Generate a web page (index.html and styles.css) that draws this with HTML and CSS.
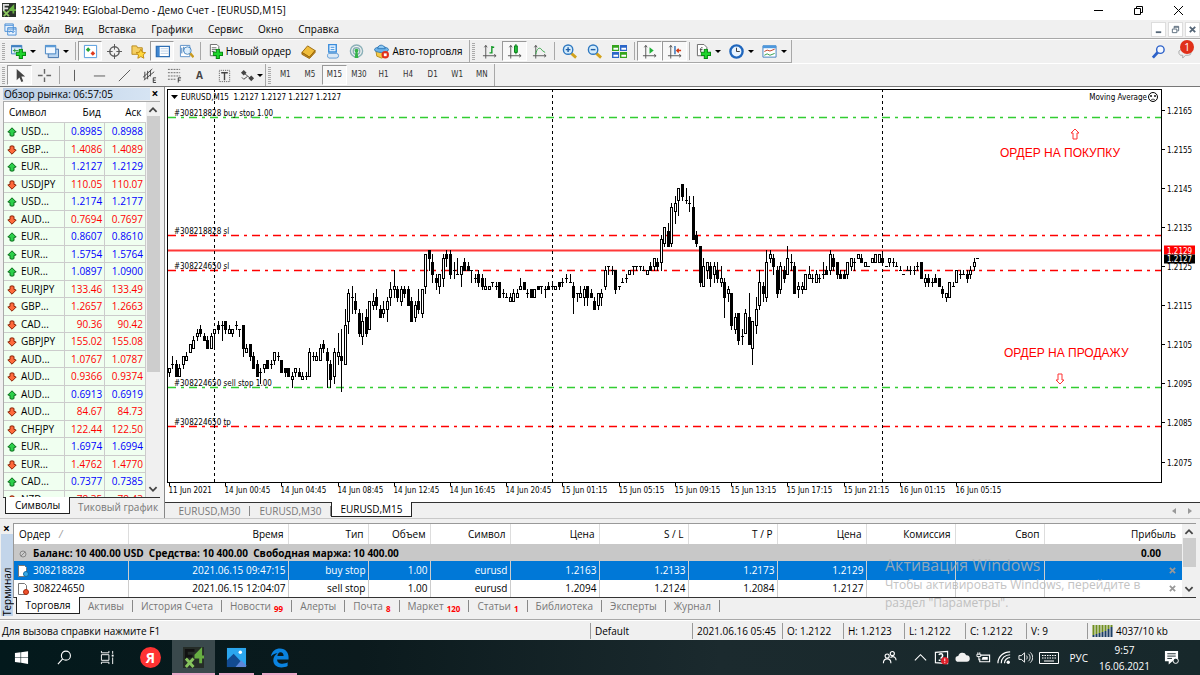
FILE: index.html
```html
<!DOCTYPE html>
<html lang="ru">
  <head>
    <meta charset="UTF-8" />
    <meta name="viewport" content="width=device-width, initial-scale=1.0" />
    <title>1235421949: EGlobal-Demo - Демо Счет - [EURUSD,M15]</title>
    <link rel="stylesheet" href="styles.css">
  </head>
  <body>
    <svg class="defs" aria-hidden="true">
      <symbol id="i-up" viewBox="0 0 10 10"><path d="M5 .8L9.2 5 7 5.4V8.6L5 9.2 3 8.6V5.4L.8 5z" fill="#2bd04a" stroke="#0b6b1c"/></symbol>
      <symbol id="i-down" viewBox="0 0 10 10"><path d="M5 9.2L.8 5 3 4.4V1.4L5 .8 7 1.4V4.4L9.2 5z" fill="#ff6a3c" stroke="#8a2408"/></symbol>
      <symbol id="i-plus" viewBox="0 0 10 10"><path d="M3.5.5h3v3h3v3h-3v3h-3v-3h-3v-3h3z" fill="#1ed52c" stroke="#078a10"/></symbol>
      <symbol id="i-axes" viewBox="0 0 16 16"><path d="M4 1.5v14M1 12.5h14M2.500 3.500L4 1.500l1.500 2M13 11l2 1.500-2 1.500" fill="none" stroke="#555"/></symbol>
    </svg>

    <header class="titlebar">
      <svg class="app-icon" viewBox="0 0 16 16"><path d="M0 0h16v16H0z" fill="#2b332c"/><path d="M1 1h7v2H3v2h4v2H3v2H1z" fill="#ddd"/><path d="M14 1L8 7v2h4v3h2V9h2V7h-2z" fill="#6ab344"/><path d="M2 9l6 6M8 9l-6 6" stroke="#8fca62" stroke-width="2"/></svg>
      <h1>1235421949: EGlobal-Demo - Демо Счет - [EURUSD,M15]</h1>
      <div class="win-buttons">
        <button aria-label="Свернуть"><svg viewBox="0 0 12 12"><path d="M2 6.500h9" stroke="#000"/></svg></button>
        <button aria-label="Восстановить"><svg viewBox="0 0 12 12"><path d="M2.500 4.500h6v6h-6zM4.500 4V2.500h6v6H9" fill="none" stroke="#000"/></svg></button>
        <button aria-label="Закрыть"><svg viewBox="0 0 12 12"><path d="M2 2l9 9M11 2l-9 9" stroke="#000"/></svg></button>
      </div>
    </header>

    <nav class="menubar">
      <svg class="menu-icon" viewBox="0 0 14 14"><path d="M1 1h9v8H1zM4 5h9v8H4z" fill="#e8f2fd" stroke="#4a8fd6"/><path d="M1 2.500h9M4 6.500h9" stroke="#4a8fd6"/><path d="M5.500 10l2-1.500 2 2 2-1.500" fill="none" stroke="#4a8fd6"/></svg>
      <a href="#">Файл</a><a href="#">Вид</a><a href="#">Вставка</a><a href="#">Графики</a><a href="#">Сервис</a><a href="#">Окно</a><a href="#">Справка</a>
      <div class="mdi-buttons">
        <button aria-label="Свернуть окно"><svg viewBox="0 0 10 10"><path d="M2 8h6" stroke="#567" stroke-width="2"/></svg></button>
        <button aria-label="Восстановить окно"><svg viewBox="0 0 10 10"><path d="M1.500 4.500h5v4h-5zM3.500 4V1.500h5v5H7M3.500 2.500h5" fill="none" stroke="#567"/></svg></button>
        <button aria-label="Закрыть окно"><svg viewBox="0 0 10 10"><path d="M2 2l6 6M8 2L2 8" stroke="#567" stroke-width="2"/></svg></button>
      </div>
    </nav>

    <div class="toolbar toolbar-main">
      <div class="band">
        <span class="grip"></span>
        <button class="drop" aria-label="Новый график"><svg viewBox="0 0 16 16"><path d="M.5 1.500h11v9H.5z" fill="#dcecfb" stroke="#3f7fc0"/><path d="M.5 2.500h11" stroke="#3f7fc0" stroke-width="2"/><path d="M2 7h6M4 5v4" stroke="#2a9a3a"/><use href="#i-plus" x="5" y="5" width="11" height="11"/></svg></button>
        <button class="drop" aria-label="Профили"><svg viewBox="0 0 16 16"><path d="M4.500 5.500h11v9h-11z" fill="#b8d4f0" stroke="#3f6fa8"/><path d="M1.500 1.500h11v9h-11z" fill="#f2f8ff" stroke="#3f7fc0"/><path d="M1.500 2.500h11" stroke="#5b9bd8" stroke-width="2"/></svg></button>
        <span class="sep"></span>
        <button class="on" aria-label="Обзор рынка"><svg viewBox="0 0 16 16"><path d="M1.500 1.500h13v13h-13z" fill="#fff" stroke="#4e98dd"/><path d="M3 6l2.500-2.500L8 6 5.500 8.500z" fill="#23a536"/><path d="M8 10l2.500-2.500L13 10l-2.500 2.500z" fill="#e03a1d"/></svg></button>
        <button aria-label="Окно данных"><svg viewBox="0 0 16 16"><circle cx="8" cy="8" r="5" fill="none" stroke="#555" stroke-width="1.500"/><path d="M8 0v6M8 10v6M0 8h6M10 8h6" stroke="#555"/></svg></button>
        <button aria-label="Навигатор"><svg viewBox="0 0 16 16"><path d="M1 2h5l1 2h5v7H1z" fill="#f5cf62" stroke="#b98a1c"/><path d="M10.500 5.500l1.600 3.300 3.500.4-2.600 2.400.7 3.600-3.200-1.800-3.200 1.800.7-3.600-2.600-2.400 3.500-.4z" fill="#ffd83c" stroke="#c08a12"/></svg></button>
        <button class="on" aria-label="Терминал"><svg viewBox="0 0 16 16"><path d="M1.500 2.500h14v11h-14z" fill="#fff" stroke="#2f6fb4" stroke-width="1.500"/><path d="M2 3h3v10H2z" fill="#3f86d0"/><path d="M6 5h8M6 7.500h8M6 10h8" stroke="#b9cfe6"/></svg></button>
        <button aria-label="Тестер стратегий"><svg viewBox="0 0 16 16"><path d="M1.500 1.500h10v12h-10z" fill="#fff" stroke="#5b8fc7"/><path d="M3 10V4M5 8V3" stroke="#3c78b8"/><circle cx="9" cy="7" r="4" fill="#d6ebfb" fill-opacity=".8" stroke="#4a86c2"/><path d="M12 10l3.500 4" stroke="#c99a1e" stroke-width="2.500"/></svg></button>
        <span class="sep"></span>
        <button class="wide"><svg viewBox="0 0 16 16"><path d="M2.500.5h7l2 2v10h-9z" fill="#fff" stroke="#666"/><path d="M4 4h5M4 6h5M4 8h3" stroke="#666"/><use href="#i-plus" x="5" y="5" width="11" height="11"/></svg>Новый ордер</button>
        <button aria-label="MetaEditor"><svg viewBox="0 0 16 16"><path d="M1 9l6-7 8 5-6 7z" fill="#f0bd3b" stroke="#99670c"/><path d="M1 9v2l8 4.500 6-6.500V7l-6 7z" fill="#c98b18" stroke="#99670c"/></svg></button>
        <button aria-label="Почта"><svg viewBox="0 0 16 16"><path d="M4 .5h8v8H4z" fill="#eaf5ff" stroke="#3b8ddb" stroke-width="1.500"/><path d="M6 3.500h4M6 6h4" stroke="#3b8ddb"/><path d="M4 15a3 3 0 010-5h8a2.500 2.500 0 010 5z" fill="#dce9f5" stroke="#5d9ad4"/></svg></button>
        <button aria-label="Сигналы"><svg viewBox="0 0 16 16"><g fill="none" stroke="#8ab0b8" stroke-width="1.500"><circle cx="8" cy="7.500" r="6.500"/><circle cx="8" cy="7.500" r="3.500"/></g><circle cx="8" cy="7" r="2" fill="#36b34a"/><path d="M7 8h2l1 7H6z" fill="#36b34a"/></svg></button>
        <button class="wide auto"><svg viewBox="0 0 16 16"><path d="M2 7l1 6 5 2 5-2 1-6z" fill="#f3ca49" stroke="#b68b1a"/><ellipse cx="8" cy="6" rx="7.500" ry="3" fill="#6db4ea" stroke="#2f76b5"/><path d="M4 5c0-5 7-5 8 0z" fill="#8cc8f3" stroke="#2f76b5"/><circle cx="12" cy="11.500" r="4" fill="#e2311b"/><path d="M10.500 10h3v3h-3z" fill="#fff"/></svg>Авто-торговля</button>
      </div>
      <div class="band charting">
        <span class="grip"></span>
        <button aria-label="Бары"><svg viewBox="0 0 16 16"><use href="#i-axes"/><path d="M10.500 2v8M8 9.500h2M11 3.500h2" stroke="#149a28" stroke-width="1.500"/></svg></button>
        <button class="on" aria-label="Японские свечи"><svg viewBox="0 0 16 16"><use href="#i-axes"/><path d="M9.500 0v11" stroke="#087a18"/><path d="M8 2h3v7H8z" fill="#25c43b" stroke="#087a18"/></svg></button>
        <button aria-label="Линия"><svg viewBox="0 0 16 16"><use href="#i-axes"/><path d="M4 11c1-6 4-9 7-4l3 2" fill="none" stroke="#36a447"/></svg></button>
        <span class="sep"></span>
        <button aria-label="Увеличить"><svg viewBox="0 0 16 16"><path d="M10 10l5 4.500" stroke="#d2a21d" stroke-width="3"/><circle cx="6.500" cy="6" r="5" fill="#d4ecfc" stroke="#2f78c0" stroke-width="1.500"/><path d="M4 6h5M6.500 3.500v5" stroke="#1f5ea6" stroke-width="1.500"/></svg></button>
        <button aria-label="Уменьшить"><svg viewBox="0 0 16 16"><path d="M10 10l5 4.500" stroke="#d2a21d" stroke-width="3"/><circle cx="6.500" cy="6" r="5" fill="#d4ecfc" stroke="#2f78c0" stroke-width="1.500"/><path d="M4 6h5" stroke="#1f5ea6" stroke-width="1.500"/></svg></button>
        <button aria-label="Окна мозаикой"><svg viewBox="0 0 16 16"><path d="M0 1h7.500v6.500H0zM8.500 8.500H16V15H8.500z" fill="#35a51e"/><path d="M8.500 1H16v6.500H8.500zM0 8.500h7.500V15H0z" fill="#2b66c8"/><path d="M1.500 4h5v2h-5zM10 4h5v2h-5zM1.500 11.500h5v2h-5zM10 11.500h5v2h-5z" fill="#fff"/></svg></button>
        <span class="sep"></span>
        <button class="on" aria-label="Автопрокрутка"><svg viewBox="0 0 16 16"><use href="#i-axes"/><path d="M8 3.500l4.500 3.500L8 10.500z" fill="#22b23a"/></svg></button>
        <button class="on" aria-label="Сдвиг графика"><svg viewBox="0 0 16 16"><use href="#i-axes"/><path d="M8.500 2v9" stroke="#2f6fb4" stroke-width="1.500"/><path d="M15 7h-4M12.500 5l-2 2 2 2" fill="none" stroke="#d23a17" stroke-width="1.500"/></svg></button>
        <span class="sep"></span>
        <button class="drop" aria-label="Индикаторы"><svg viewBox="0 0 16 16"><path d="M1.500.5h7l3 3v9h-10z" fill="#fff" stroke="#666"/><path d="M5 9V5c0-1 1-1.500 2-1M4 6h3" fill="none" stroke="#444"/><use href="#i-plus" x="5" y="5" width="11" height="11"/></svg></button>
        <button class="drop" aria-label="Периоды"><svg viewBox="0 0 16 16"><circle cx="8" cy="8" r="6.500" fill="#e7f3ff" stroke="#1f66bd" stroke-width="2.500"/><path d="M8 4v4h3.500" fill="none" stroke="#333"/></svg></button>
        <button class="drop" aria-label="Шаблоны"><svg viewBox="0 0 16 16"><path d="M1 2h14v12H1z" fill="#fff" stroke="#3f7fc0"/><path d="M1 3h14" stroke="#4e98dd" stroke-width="3"/><path d="M2.500 8l3-1.500 3 1 5-2" fill="none" stroke="#c0391c"/><path d="M2.500 12l3-1.500 3 1.500 5-2" fill="none" stroke="#2b9a48"/></svg></button>
      </div>
      <div class="tool-right">
        <button aria-label="Поиск"><svg viewBox="0 0 16 16"><path d="M7.500 8.500l-5.500 6" stroke="#2d62c9" stroke-width="3"/><circle cx="10" cy="6" r="4" fill="#f4f8ff" stroke="#2d62c9" stroke-width="1.500"/></svg></button>
        <button class="chat" aria-label="Сообщения"><svg viewBox="0 0 16 16"><path d="M3 6h8a3 3 0 010 6H8l-3 3v-3a3 3 0 01-2-6z" fill="#eee" stroke="#aaa"/></svg><span class="badge">1</span></button>
      </div>
    </div>

    <div class="toolbar toolbar-line">
      <div class="band tools">
        <span class="grip"></span>
        <button class="on" aria-label="Курсор"><svg viewBox="0 0 16 16"><path d="M5 1v12l3-3 2 5 2-1-2-5h4z" fill="#444"/></svg></button>
        <button aria-label="Перекрестие"><svg viewBox="0 0 16 16"><path d="M8 1v5M8 10v5M1 8h5M10 8h5" stroke="#666" stroke-width="1.500"/></svg></button>
        <span class="sep"></span>
        <button aria-label="Вертикальная линия"><svg viewBox="0 0 16 16"><path d="M8 2v12" stroke="#555"/></svg></button>
        <button aria-label="Горизонтальная линия"><svg viewBox="0 0 16 16"><path d="M2 8.500h12" stroke="#555"/></svg></button>
        <button aria-label="Трендовая линия"><svg viewBox="0 0 16 16"><path d="M2 14L14 2" stroke="#555"/></svg></button>
        <button aria-label="Канал"><svg viewBox="0 0 16 16"><path d="M1 10L11 1M2 13L13 4M3 4v8M6 3v9M9 2v7" stroke="#444"/><path d="M15 10.500h-3v5h3M12 13h2.500" fill="none" stroke="#333"/></svg></button>
        <button aria-label="Фибоначчи"><svg viewBox="0 0 16 16"><path d="M1 1.500h13M1 5h13M1 8.500h13M1 12h8" stroke="#666" stroke-dasharray="2 1"/><path d="M15 10.500h-3v5M12 13h2.500" fill="none" stroke="#333"/></svg></button>
        <button class="glyph">A</button>
        <button aria-label="Метка"><svg viewBox="0 0 16 16"><path d="M2.500 2.500h11v12h-11z" fill="none" stroke="#555" stroke-dasharray="1 1"/><path d="M4.500 5h7M8 5v8" stroke="#444" stroke-width="1.500"/></svg></button>
        <button class="drop" aria-label="Стрелки"><svg viewBox="0 0 16 16"><path d="M1 5l3-3 3 3-3 3zM9 11l3-3 3 3-3 3z" fill="#444"/><path d="M5 6l6 5M2 10l2 2 4-3" fill="none" stroke="#444"/></svg></button>
      </div>
      <div class="band">
        <span class="grip"></span>
        <div class="periods">
          <button>M1</button><button>M5</button><button class="on">M15</button><button>M30</button><button>H1</button><button>H4</button><button>D1</button><button>W1</button><button>MN</button>
        </div>
      </div>
    </div>

    <main>
      <section class="market">
        <div class="panel-title"><h2>Обзор рынка: 06:57:05</h2><button aria-label="Закрыть обзор">×</button></div>
        <div class="market-body">
          <div class="market-list">
            <table>
              <thead><tr><th>Символ</th><th>Бид</th><th>Аск</th></tr></thead>
              <tbody id="quotes"></tbody>
            </table>
          </div>
          <div class="scroll">
            <svg viewBox="0 0 10 10"><path d="M2 6.500l3-3 3 3" fill="none" stroke="#444" stroke-width="1.500"/></svg>
            <span class="thumb"></span>
            <svg viewBox="0 0 10 10"><path d="M2 3.500l3 3 3-3" fill="none" stroke="#444" stroke-width="1.500"/></svg>
          </div>
        </div>
        <div class="market-tabs"><button class="active">Символы</button><button>Тиковый график</button></div>
      </section>

      <section class="chart">
        <svg id="chart"></svg>
        <div class="chart-tabs">
          <button>EURUSD,M30</button><button>EURUSD,M30</button><button class="active">EURUSD,M15</button>
          <div class="tab-arrows"><svg viewBox="0 0 8 8"><path d="M6 1v6L2 4z" fill="#999"/></svg><svg viewBox="0 0 8 8"><path d="M2 1v6l4-3z" fill="#999"/></svg></div>
        </div>
      </section>
    </main>

    <section class="terminal">
      <div class="terminal-side"><button aria-label="Закрыть терминал">×</button><span>Терминал</span></div>
      <div class="terminal-body">
        <div class="orders">
          <table>
            <colgroup><col class="c-order"><col class="c-time"><col class="c-type"><col class="c-vol"><col class="c-type"><col class="c-price"><col class="c-price"><col class="c-price"><col class="c-price"><col class="c-price"><col class="c-price"><col></colgroup>
            <thead>
              <tr><th>Ордер <i>/</i></th><th>Время</th><th>Тип</th><th>Объем</th><th>Символ</th><th>Цена</th><th>S / L</th><th>T / P</th><th>Цена</th><th>Комиссия</th><th>Своп</th><th>Прибыль</th></tr>
            </thead>
            <tbody>
              <tr class="balance"><td colspan="11"><svg viewBox="0 0 12 12"><circle cx="6" cy="6" r="3" fill="#ccc" stroke="#888"/><path d="M4 8l4-4" stroke="#888"/></svg>Баланс: 10 400.00 USD&nbsp; Средства: 10 400.00&nbsp; Свободная маржа: 10 400.00</td><td>0.00</td></tr>
              <tr class="selected"><td><svg viewBox="0 0 12 12"><path d="M1.500.5h6l2 2v9h-8z" fill="#fff" stroke="#777"/><circle cx="9" cy="9" r="2.500" fill="#35a9e8" stroke="#0d6ca5"/></svg>308218828</td><td>2021.06.15 09:47:15</td><td>buy stop</td><td>1.00</td><td>eurusd</td><td>1.2163</td><td>1.2133</td><td>1.2173</td><td>1.2129</td><td></td><td></td><td><button aria-label="Удалить ордер 308218828"><svg viewBox="0 0 8 8"><path d="M1 1l6 6M7 1L1 7"/></svg></button></td></tr>
              <tr><td><svg viewBox="0 0 12 12"><path d="M1.500.5h6l2 2v9h-8z" fill="#fff" stroke="#777"/><circle cx="9" cy="9" r="2.500" fill="#f0502c" stroke="#a52a0d"/></svg>308224650</td><td>2021.06.15 12:04:07</td><td>sell stop</td><td>1.00</td><td>eurusd</td><td>1.2094</td><td>1.2124</td><td>1.2084</td><td>1.2127</td><td></td><td></td><td><button aria-label="Удалить ордер 308224650"><svg viewBox="0 0 8 8"><path d="M1 1l6 6M7 1L1 7"/></svg></button></td></tr>
            </tbody>
          </table>
          <div class="scroll small">
            <svg viewBox="0 0 10 10"><path d="M2 6.500l3-3 3 3" fill="none" stroke="#444" stroke-width="1.500"/></svg>
            <span class="thumb"></span>
            <svg viewBox="0 0 10 10"><path d="M2 3.500l3 3 3-3" fill="none" stroke="#444" stroke-width="1.500"/></svg>
          </div>
        </div>
        <div class="terminal-tabs">
          <button class="active">Торговля</button><button>Активы</button><button>История Счета</button><button>Новости<b>99</b></button><button>Алерты</button><button>Почта<b>8</b></button><button>Маркет<b>120</b></button><button>Статьи<b>1</b></button><button>Библиотека</button><button>Эксперты</button><button>Журнал</button>
        </div>
      </div>
      <div class="watermark"><strong>Активация Windows</strong><p>Чтобы активировать Windows, перейдите в раздел "Параметры".</p></div>
    </section>

    <div class="statusbar">
      <span class="hint">Для вызова справки нажмите F1</span>
      <span class="s-profile">Default</span>
      <span class="s-date">2021.06.16 05:45</span>
      <span>O: 1.2122</span><span>H: 1.2123</span><span>L: 1.2122</span><span>C: 1.2122</span><span>V: 9</span>
      <span class="s-net"><svg viewBox="0 0 22 12"><path d="M1.500 0v10M4.500 0v9M7.500 0v8M10.500 0v7M13.500 0v6M16.500 0v4M19.500 0v2" stroke="#6f8f1e" stroke-width="2"/><path d="M1.500 10v2M4.500 9v3M7.500 8v4M10.500 7v5M13.500 6v6M16.500 4v8M19.500 2v10" stroke="#1c3f66" stroke-width="2"/></svg>4037/10 kb</span>
    </div>

    <footer class="taskbar">
      <button aria-label="Пуск"><svg viewBox="0 0 16 16"><path d="M1 3.200l6-.8v5.200H1zM7.600 2.300L15 1.200v6.400H7.600zM1 8.300h6v5.300l-6-.8zM7.600 8.300H15v6.500l-7.400-1.100z" fill="#fff"/></svg></button>
      <button aria-label="Поиск Windows"><svg viewBox="0 0 16 16"><circle cx="9.500" cy="6" r="4.800" fill="none" stroke="#fff" stroke-width="1.200"/><path d="M6 9.500L1 15" stroke="#fff" stroke-width="1.200"/></svg></button>
      <button aria-label="Представление задач"><svg viewBox="0 0 16 16"><path d="M1.500 5h8v6h-8zM1.500 1v2h8V1M1.500 15v-2h8v2M13.500 1v3M13.500 8v7" fill="none" stroke="#fff"/><path d="M12.500 5h2v2h-2z" fill="#fff"/></svg></button>
      <button class="yandex" aria-label="Яндекс">Я</button>
      <button class="running current" aria-label="MetaTrader"><svg class="big" viewBox="0 0 22 22"><path d="M0 0h22v22H0z" fill="#252c27"/><path d="M2 2h10v3H5v3h5v3H5v3H2z" fill="#111"/><path d="M20 0l-8 8v4h5v5h3v-5h2V9h-2z" fill="#67ae42"/><path d="M3 12l8 9M11 12l-8 9" stroke="#86c35d" stroke-width="3"/></svg></button>
      <button class="running" aria-label="Фотографии"><svg class="big" viewBox="0 0 22 22"><path d="M1 1h20v20H1z" fill="#2ba6ee"/><path d="M1 14l7-7 13 14H1z" fill="#124b91"/><path d="M10 21l6-7 5 5v2z" fill="#5d86d8"/><circle cx="15" cy="5.500" r="1.800" fill="#fff"/></svg></button>
      <button class="running" aria-label="Edge"><svg class="big" viewBox="0 0 22 22"><path d="M2 10C3 4 7 1.500 11.500 1.500c6 0 9 4.500 9 9V13H8.500c0 3 2.500 4.500 5.500 4.500 2 0 4-.5 5.500-1.500v4c-2 1-4 1.500-6.500 1.500-5 0-8.500-3-8.500-7.500 0-3.500 2-6 4.500-7.500C6 6.800 3.500 8 2 10zM8.800 9.500h6.500c0-2.500-1.200-4-3.200-4S9 7.500 8.800 9.500z" fill="#0a83e0"/></svg></button>
      <div class="tray">
        <svg viewBox="0 0 16 16"><g fill="none" stroke="#fff" stroke-width="1.200"><circle cx="5.500" cy="6.500" r="2.200"/><circle cx="11" cy="3.800" r="2.200"/><path d="M1.500 14c0-6 8-6 8 0M9 8c3-2 6-.5 6 3"/></g></svg>
        <svg viewBox="0 0 16 16"><path d="M2 11l6-6 6 6" fill="none" stroke="#fff" stroke-width="1.200"/></svg>
        <svg viewBox="0 0 16 16"><path d="M1.500 2.500L14.500 1.500v13L1.500 13.500z" fill="none" stroke="#fff" stroke-width="1.200"/><path d="M5 5c4-3 6 1 2 4M5 11h2" fill="none" stroke="#fff" stroke-width="1.500"/><circle cx="11.500" cy="11.500" r="4" fill="#e0202a"/><path d="M11.500 9v3M11.500 13v1" stroke="#fff"/></svg>
        <svg viewBox="0 0 16 16"><path d="M3.500 12.500a3 3 0 010-6 4.500 4.500 0 018.500-1 3.500 3.500 0 01.5 7z" fill="#f1f1f1"/></svg>
        <svg viewBox="0 0 16 16"><path d="M5 5.500h9.500v7H4V9" fill="none" stroke="#fff" stroke-width="1.200"/><path d="M7 7.500h5.500v3H6z" fill="#fff"/><path d="M1 4.500h4v2.500H1zM2 2.500v2M4 2.500v2M3 7v4" stroke="#fff" fill="none"/></svg>
        <svg viewBox="0 0 16 16"><g fill="none" stroke="#fff" stroke-width="1.200"><path d="M1 14C1 7 7 2 14 2"/><path d="M4.500 14c0-5 4-9 9.500-9"/><path d="M8 14c0-3 2.500-6 6-6"/></g><circle cx="12" cy="13" r="1.800" fill="#fff"/></svg>
        <svg viewBox="0 0 16 16"><path d="M1 6h2.500L7 3v10L3.500 10H1z" fill="none" stroke="#fff"/><path d="M9 6c1 1 1 3 0 4M11 4c2.500 2 2.500 6 0 8M13 2.500c3.500 3 3.500 8 0 11" fill="none" stroke="#fff"/></svg>
        <svg class="kbd" viewBox="0 0 20 12"><path d="M.5.5h19v11H.5z" fill="none" stroke="#fff"/><path d="M3 3.500h14M3 6h14" stroke="#fff" stroke-dasharray="1.500 1"/><path d="M5 9h10" stroke="#fff"/></svg>
        <span class="lang">РУС</span>
        <div class="clock"><time>9:57</time><time>16.06.2021</time></div>
        <svg class="note" viewBox="0 0 16 16"><path d="M1 1h14v11H9l-4 3.500V12H1z" fill="#fff"/><path d="M3.500 4h9M3.500 6.500h9M3.500 9h5" stroke="#1a2a2d"/><circle cx="12.500" cy="11.500" r="2.800" fill="#1a2a2d" stroke="#fff"/></svg>
      </div>
    </footer>
    <script src="script.js"></script>
  </body>
</html>
```

FILE: styles.css
```css
* {
  box-sizing: border-box;
}
html,
body {
  height: 100%;
  margin: 0;
}
body {
  display: flex;
  flex-direction: column;
  overflow: hidden;
  background-color: #f0f0f0;
  color: #000;
  font-family: "Open Sans", "Noto Sans", sans-serif;
  font-size: 10px;
  line-height: 14px;
}
h1,
h2,
p {
  margin: 0;
  font-size: 10px;
  font-weight: normal;
}
button {
  display: flex;
  align-items: center;
  justify-content: center;
  margin: 0;
  padding: 0;
  border: none;
  background: none;
  color: inherit;
  font: inherit;
  white-space: nowrap;
}
svg {
  flex: none;
}
.defs {
  position: absolute;
  width: 0;
  height: 0;
}

/* title and menu */
.titlebar {
  display: flex;
  align-items: center;
  flex: none;
  height: 20px;
  padding-left: 2px;
  background-color: #fff;
}
.app-icon {
  width: 14px;
  height: 14px;
  margin-right: 4px;
}
.win-buttons {
  display: flex;
  margin-left: auto;
  padding-right: 2px;
}
.win-buttons button {
  width: 40px;
  height: 18px;
}
.win-buttons svg {
  width: 12px;
  height: 12px;
}
.menubar {
  display: flex;
  align-items: center;
  flex: none;
  height: 19px;
  padding-left: 4px;
  border-bottom: 1px solid #a8a8a8;
}
.menu-icon {
  width: 13px;
  height: 13px;
}
.menubar a {
  padding: 0 8px 0 7px;
  color: #000;
  text-decoration: none;
}
.mdi-buttons {
  display: flex;
  gap: 2px;
  margin-left: auto;
}
.mdi-buttons button {
  width: 15px;
  height: 15px;
  background-color: #fff;
  border: 1px solid #ddd;
}
.mdi-buttons svg {
  width: 9px;
  height: 9px;
}

/* toolbars */
.toolbar {
  display: flex;
  flex: none;
  height: 24px;
  border-top: 1px solid #fff;
}
.toolbar-line {
  height: 23px;
}
.band {
  display: flex;
  align-items: center;
  padding-left: 2px;
  border-right: 1px solid #a8a8a8;
  border-bottom: 1px solid #a8a8a8;
}
.toolbar-line .band {
  border-bottom: none;
}
.grip {
  width: 3px;
  height: 17px;
  margin-right: 2px;
  background: repeating-linear-gradient(#aaa 0 1px, #f0f0f0 1px 2px);
}
.sep {
  width: 1px;
  height: 18px;
  margin: 0 2px;
  background-color: #a8a8a8;
}
.band button {
  width: 24px;
  height: 20px;
  border: 1px solid transparent;
}
.band svg,
.tool-right svg {
  width: 15px;
  height: 15px;
}
.tools button,
.charting button {
  width: 25px;
}
.band .on {
  background-color: #f8f8f8;
  border-color: #999 #fff #fff #999;
}
.band .drop {
  width: 33px;
  gap: 4px;
}
.drop::after {
  content: "";
  border: 3px solid transparent;
  border-top-color: #000;
  border-bottom: none;
}
.band .wide {
  width: 93px;
  gap: 3px;
}
.band .auto {
  width: 101px;
}
.tool-right {
  display: flex;
  align-items: center;
  gap: 10px;
  margin-left: auto;
  padding-right: 6px;
}
.tool-right .chat {
  position: relative;
  width: 18px;
}
.badge {
  position: absolute;
  top: -4px;
  right: 0;
  width: 14px;
  height: 14px;
  border-radius: 7px;
  background-color: #e0301a;
  color: #fff;
  text-align: center;
}
.tools .glyph {
  color: #444;
  font-weight: bold;
}
.tools .drop {
  width: 28px;
  gap: 2px;
}
.periods {
  display: flex;
  width: 221px;
}
.periods button {
  flex: 1;
  color: #333;
  font-family: "DejaVu Sans Condensed", "DejaVu Sans", sans-serif;
  font-size: 8px;
}

main {
  display: flex;
  flex: 1;
  min-height: 0;
  border-top: 1px solid #777;
  border-bottom: 1px solid #c8c8c8;
}

/* market watch */
.market {
  display: flex;
  flex-direction: column;
  width: 165px;
  padding: 0 4px 2px 3px;
  border-right: 1px solid #888;
}
.panel-title {
  display: flex;
  align-items: center;
  flex: none;
  height: 14px;
}
.panel-title h2 {
  flex: 1;
  height: 12px;
  padding-left: 1px;
  line-height: 12px;
  background: linear-gradient(90deg, #b9cde5, #d6e4f3);
}
.panel-title button {
  width: 10px;
  height: 12px;
  font-size: 12px;
  font-weight: bold;
}
.market-body {
  display: flex;
  flex: 1;
  min-height: 0;
  border-top: 1px solid #aaa;
  border-left: 1px solid #aaa;
}
.market-list {
  flex: 1;
  overflow: hidden;
  background-color: #fff;
}
table {
  width: 100%;
  border-collapse: collapse;
  table-layout: fixed;
}
th,
td {
  padding: 0;
  font-weight: normal;
  white-space: nowrap;
}
.market th {
  height: 20px;
  padding-right: 4px;
  text-align: right;
  border-bottom: 1px solid #ccc;
}
.market th:first-child {
  width: 60px;
  padding-left: 5px;
  text-align: left;
}
.market td {
  height: 17px;
  padding-right: 2px;
  text-align: right;
  line-height: 14px;
  background-color: #f0fff0;
  border-bottom: 1px solid #ccc;
  border-right: 1px solid #ccc;
}
.market tr:nth-child(odd) td {
  height: 18px;
}
.market td:first-child {
  padding-left: 3px;
  text-align: left;
}
.market td svg {
  width: 10px;
  height: 10px;
  margin-right: 4px;
  vertical-align: -2px;
}
.up {
  color: #00f;
}
.down {
  color: #f00;
}
.scroll {
  display: flex;
  flex-direction: column;
  align-items: center;
  width: 14px;
  padding: 2px 0;
  background-color: #f0f0f0;
}
.scroll svg {
  width: 12px;
  height: 12px;
}
.thumb {
  width: 13px;
  height: 256px;
  margin-bottom: auto;
  background-color: #cdcdcd;
}
.small .thumb {
  height: 29px;
}
.market-tabs {
  display: flex;
  flex: none;
  height: 19px;
  border-top: 1px solid #333;
}
.market-tabs button {
  height: 17px;
  padding-left: 8px;
  color: #777;
}
.market-tabs .active {
  width: 65px;
  margin: -1px 0 0 2px;
  padding: 0;
  color: #000;
  background-color: #fff;
  border: 1px solid #222;
  border-top: none;
}

/* chart window */
.chart {
  display: flex;
  flex-direction: column;
  flex: 1;
  min-width: 0;
}
#chart {
  display: block;
  flex: 1;
  width: 100%;
  min-height: 0;
  background-color: #fff;
  font-family: "DejaVu Sans Condensed", "DejaVu Sans", sans-serif;
  font-size: 8px;
}
#chart .note-text {
  font-family: "Liberation Sans", Arial, sans-serif;
  font-size: 12px;
  fill: #f00;
}
.chart-tabs {
  display: flex;
  flex: none;
  height: 16px;
  padding-left: 4px;
  border-top: 1px solid #333;
}
.chart-tabs button {
  width: 81px;
  height: 15px;
  color: #777;
  background: linear-gradient(#888, #888) right center / 1px 10px no-repeat;
}
.chart-tabs .active {
  margin-top: -1px;
  color: #000;
  background: #fff;
  border: 1px solid #222;
  border-top: none;
}
.tab-arrows {
  display: flex;
  align-items: center;
  gap: 8px;
  margin-left: auto;
  padding-right: 6px;
}
.tab-arrows svg {
  width: 8px;
  height: 8px;
}

/* terminal */
.terminal {
  position: relative;
  display: flex;
  flex: none;
  height: 101px;
  padding: 4px 4px 0 0;
  border-bottom: 1px solid #a8a8a8;
}
.terminal-side {
  display: flex;
  flex-direction: column;
  align-items: center;
  width: 13px;
}
.terminal-side button {
  height: 11px;
  font-size: 12px;
  font-weight: bold;
}
.terminal-side span {
  flex: 1;
  width: 12px;
  margin-bottom: 3px;
  line-height: 12px;
  writing-mode: vertical-rl;
  transform: rotate(180deg);
  background-color: #c3d5ea;
}
.terminal-body {
  flex: 1;
  min-width: 0;
}
.orders {
  display: flex;
  height: 75px;
  border-top: 1px solid #999;
  border-left: 1px solid #999;
  border-bottom: 1px solid #333;
  background-color: #fff;
}
.orders table {
  flex: 1;
  width: auto;
}
.c-order {
  width: 114px;
}
.c-time {
  width: 160px;
}
.c-type {
  width: 80px;
}
.c-vol {
  width: 62px;
}
.c-price {
  width: 89px;
}
.orders th {
  height: 20px;
  padding-right: 4px;
  text-align: right;
  border-right: 1px solid #ddd;
}
.orders th:first-child {
  padding-left: 5px;
  text-align: left;
}
.orders th i {
  margin-left: 6px;
  color: #999;
}
.orders td {
  height: 17px;
  padding-right: 2px;
  text-align: right;
  border-right: 1px solid #ccc;
}
.orders td:first-child {
  padding-left: 3px;
  text-align: left;
}
.orders tr > :last-child {
  padding-right: 6px;
  border-right: none;
}
.orders td svg {
  width: 12px;
  height: 12px;
  margin-right: 4px;
  vertical-align: -3px;
}
.orders .balance td {
  height: 17px;
  font-weight: bold;
  background-color: #c8c8c8;
  border: none;
}
.orders .balance td:last-child {
  padding-right: 21px;
}
.orders .selected td {
  height: 18px;
  color: #fff;
  background-color: #0078d7;
}
.orders td button {
  margin-left: auto;
}
.orders td button svg {
  width: 7px;
  height: 7px;
  margin: 0;
  stroke: #999;
  stroke-width: 2;
}
.terminal-tabs {
  display: flex;
  height: 18px;
  padding-left: 3px;
}
.terminal-tabs button {
  height: 16px;
  padding: 0 9px 0 8px;
  color: #777;
  background: linear-gradient(#888, #888) right center / 1px 12px no-repeat;
}
.terminal-tabs .active {
  width: 64px;
  height: 17px;
  margin-top: -1px;
  padding: 0;
  color: #000;
  background: #fff;
  border: 1px solid #222;
  border-top: none;
}
.terminal-tabs b {
  margin-left: 3px;
  padding-top: 6px;
  color: #f00;
  font-size: 8px;
}
.watermark {
  position: absolute;
  top: 37px;
  right: 36px;
  width: 279px;
  color: #b4b4b4;
  font-size: 12px;
  line-height: 18px;
  opacity: 0.8;
}
.watermark strong {
  font-size: 16px;
  font-weight: normal;
}
.watermark p {
  font-size: 12px;
}

/* status line */
.statusbar {
  display: flex;
  align-items: center;
  flex: none;
  height: 20px;
  padding: 0 0 0 2px;
  border-top: 1px solid #fff;
}
.statusbar span {
  width: 61px;
  padding-left: 4px;
  line-height: 16px;
  border-left: 1px solid #999;
}
.statusbar .hint {
  flex: 1;
  padding: 0;
  border: none;
}
.statusbar .s-profile {
  width: 102px;
}
.statusbar .s-date {
  width: 90px;
}
.statusbar .s-net {
  display: flex;
  align-items: center;
  width: 113px;
}
.statusbar svg {
  width: 22px;
  height: 12px;
  margin-right: 2px;
}

/* taskbar */
.taskbar {
  display: flex;
  flex: none;
  height: 35px;
  background: linear-gradient(90deg, #03191c, #0b1a1d 30%, #1b2a2e 60%, #17282b);
  color: #fff;
}
.taskbar button {
  width: 43px;
  height: 35px;
}
.taskbar button svg {
  width: 15px;
  height: 15px;
}
.taskbar button .big {
  width: 21px;
  height: 21px;
}
.taskbar .yandex {
  width: 21px;
  height: 21px;
  margin: 7px 11px;
  border-radius: 11px;
  background-color: #f33;
  font-size: 14px;
  font-weight: bold;
}
.taskbar .running {
  background: linear-gradient(#e9a8c8, #e9a8c8) center bottom / 35px 2px no-repeat;
}
.taskbar .current {
  background: linear-gradient(#e9a8c8, #e9a8c8) center bottom / 43px 2px no-repeat, #3a494c;
}
.tray {
  display: flex;
  align-items: center;
  gap: 6px;
  margin-left: auto;
  padding-right: 21px;
}
.tray svg {
  width: 15px;
  height: 15px;
}
.tray svg:first-child {
  margin-right: 10px;
}
.tray .kbd {
  width: 20px;
  height: 12px;
}
.lang {
  margin-left: 5px;
}
.clock {
  display: flex;
  flex-direction: column;
  align-items: center;
  margin: 0 8px 0 5px;
  line-height: 16px;
}
```

FILE: script.js
```js
var quotes = [
  ["USD...", "0.8985", "0.8988", 1], ["GBP...", "1.4086", "1.4089", 0],
  ["EUR...", "1.2127", "1.2129", 1], ["USDJPY", "110.05", "110.07", 0],
  ["USD...", "1.2174", "1.2177", 1], ["AUD...", "0.7694", "0.7697", 0],
  ["EUR...", "0.8607", "0.8610", 1], ["EUR...", "1.5754", "1.5764", 1],
  ["EUR...", "1.0897", "1.0900", 1], ["EURJPY", "133.46", "133.49", 0],
  ["GBP...", "1.2657", "1.2663", 0], ["CAD...", "90.36", "90.42", 0],
  ["GBPJPY", "155.02", "155.08", 0], ["AUD...", "1.0767", "1.0787", 0],
  ["AUD...", "0.9366", "0.9374", 0], ["AUD...", "0.6913", "0.6919", 1],
  ["AUD...", "84.67", "84.73", 0], ["CHFJPY", "122.44", "122.50", 0],
  ["EUR...", "1.6974", "1.6994", 1], ["EUR...", "1.4762", "1.4770", 0],
  ["CAD...", "0.7377", "0.7385", 1], ["NZD...", "78.35", "78.43", 0]
];

// open, high, low, close in points above 1.2000
var candles = [
  [98,99,97,99],[100,102,99,100],[100,101,97,97],[97,100,97,99],[100,102,99,102],[101,103,101,102],[103,105,103,105],[104,107,104,106],
  [107,109,106,108],[109,110,107,108],[107,108,106,106],[106,107,104,104],[104,108,104,107],[108,109,104,109],[110,111,108,109],[110,111,106,110],
  [111,111,108,109],[108,110,108,109],[108,109,107,109],[110,111,109,110],[109,109,107,109],[110,110,102,104],[103,105,103,104],[105,105,101,102],
  [102,103,99,99],[100,101,97,97],[98,99,95,98],[99,100,98,100],[101,101,99,99],[100,101,99,100],[101,103,100,103],[102,103,101,102],
  [101,101,98,98],[99,99,97,98],[99,99,97,97],[96,98,94,97],[98,99,97,99],[98,99,97,97],[96,98,96,97],[97,98,96,97],
  [97,104,97,103],[102,103,101,102],[101,103,101,102],[101,105,101,104],[105,106,103,104],[103,104,94,101],[100,101,94,96],[97,104,95,103],
  [102,108,100,103],[102,109,93,101],[100,114,100,110],[111,119,108,118],[117,120,113,117],[116,118,113,114],[113,114,107,108],[107,113,105,111],
  [112,114,107,108],[109,116,109,116],[115,118,114,116],[117,119,114,115],[114,115,112,112],[113,116,112,114],[114,117,111,116],[117,121,115,119],
  [119,124,117,120],[119,120,116,117],[116,120,115,119],[119,120,117,118],[119,120,115,115],[116,117,111,111],[112,116,111,115],[116,119,113,114],
  [113,119,112,119],[120,128,118,128],[129,129,124,127],[126,128,121,123],[122,123,119,121],[120,123,118,123],[122,128,120,127],[128,129,125,127],
  [128,129,122,123],[124,126,122,124],[123,127,123,123],[123,125,120,125],[126,127,124,124],[125,126,124,124],[124,124,121,124],[122,123,121,122],
  [123,124,120,121],[122,123,119,120],[119,122,119,120],[119,120,119,120],[121,121,120,121],[120,121,119,120],[121,121,117,117],[118,119,117,118],
  [117,118,117,117],[116,118,116,117],[116,119,116,118],[117,119,117,118],[119,122,119,120],[121,121,119,119],[118,119,117,118],[119,119,117,117],
  [117,119,117,119],[120,120,119,119],[120,120,118,120],[119,120,117,119],[120,121,119,119],[120,121,119,120],[119,120,119,120],[121,121,119,120],
  [121,122,120,121],[122,123,121,122],[121,123,121,121],[120,121,113,117],[118,118,116,118],[117,120,117,118],[117,120,115,119],[120,120,115,117],
  [118,119,117,117],[116,117,114,114],[115,118,114,118],[117,119,115,118],[120,125,119,124],[125,125,123,125],[124,125,123,124],[124,124,118,119],
  [120,120,119,120],[121,122,121,121],[122,123,121,122],[123,124,123,124],[125,125,123,125],[125,125,124,125],[125,125,124,125],[124,125,124,124],
  [123,124,123,124],[125,126,124,124],[125,127,124,127],[126,127,124,125],[126,133,124,132],[131,135,130,135],[134,136,130,130],[131,141,130,140],
  [139,143,136,141],[142,145,138,145],[146,146,142,143],[142,145,141,142],[141,143,139,141],[140,143,132,132],[133,134,130,131],[130,130,120,121],
  [120,127,120,125],[124,126,122,126],[125,126,120,122],[123,126,121,125],[124,126,121,122],[121,125,120,122],[121,122,112,117],[118,120,116,119],
  [118,118,109,110],[109,113,108,112],[113,113,105,106],[107,109,105,107],[108,114,108,113],[112,118,105,105],[104,111,100,111],[110,117,108,114],
  [115,124,114,121],[120,121,116,118],[117,129,116,126],[127,129,126,128],[127,128,123,125],[124,125,117,118],[119,126,118,125],[124,125,121,122],
  [123,130,123,127],[126,128,124,126],[125,126,118,118],[119,121,117,120],[119,121,118,120],[119,123,119,123],[122,125,122,123],[122,123,121,122],
  [121,124,121,123],[122,123,121,122],[123,126,122,123],[124,125,123,123],[124,129,123,128],[127,128,124,125],[126,126,122,123],[123,124,122,122],
  [123,124,122,122],[123,126,122,126],[125,127,124,127],[126,127,124,126],[127,128,127,128],[127,128,126,126],[125,126,125,126],[125,125,125,125],
  [126,127,126,127],[126,128,126,128],[126,128,126,128],[127,128,126,126],[125,125,125,125],[126,127,125,127],[126,127,125,126],[125,126,125,125],
  [124,125,124,124],[123,123,123,123],[124,125,124,124],[124,125,123,124],[124,125,123,124],[125,126,124,125],[126,126,122,122],[121,123,120,122],
  [122,123,120,121],[121,122,120,121],[122,123,121,121],[122,122,120,120],[119,120,117,118],[117,118,116,118],[117,121,117,121],[120,121,120,120],
  [121,124,121,124],[123,124,122,123],[123,124,123,123],[123,124,121,122],[123,125,122,124],[125,127,124,126],[127,127,127,127]
];

var levels = [
  [163, "#32cd32", "#308218828 buy stop 1.00"],
  [133, "#f00", "#308218828 sl"],
  [124, "#f00", "#308224650 sl"],
  [94, "#32cd32", "#308224650 sell stop 1.00"],
  [84, "#f00", "#308224650 tp"]
];

var times = ["11 Jun 2021", "14 Jun 00:45", "14 Jun 04:45", "14 Jun 08:45", "14 Jun 12:45", "14 Jun 16:45", "14 Jun 20:45", "15 Jun 01:15",
  "15 Jun 05:15", "15 Jun 09:15", "15 Jun 13:15", "15 Jun 17:15", "15 Jun 21:15", "16 Jun 01:15", "16 Jun 05:15"];

function drawQuotes() {
  var str = "";
  for (var i = 0; i < quotes.length; i++) {
    var q = quotes[i];
    var dir = q[3] ? "up" : "down";
    str += `<tr><td><svg><use href="#i-${dir}"/></svg>${q[0]}</td><td class="${dir}">${q[1]}</td><td class="${dir}">${q[2]}</td></tr>`;
  }
  document.querySelector("#quotes").innerHTML = str;
}

function line(x1, y1, x2, y2, color, extra) {
  return `<line x1="${x1}" y1="${y1}" x2="${x2}" y2="${y2}" stroke="${color}" ${extra || ""}/>`;
}

function drawChart() {
  var svg = document.querySelector("#chart");
  var w = svg.clientWidth;
  var h = svg.clientHeight;
  var left = 3, top = 2, right = w - 38, bottom = h - 20;
  var step = 3.515;
  var scale = (bottom - top) / 100.5;
  var X = function (i) { return Math.round(left + 0.8 + i * step) + 0.5; };
  var Y = function (p) { return Math.round(top - 0.5 + (170.4 - p) * scale) + 0.5; };
  var str = "";
  var i;

  for (i = 0; i < levels.length; i++) {
    str += line(left, Y(levels[i][0]), right, Y(levels[i][0]), levels[i][1], 'stroke-width="1.5" stroke-dasharray="8 5 3 5"');
  }
  str += `<rect x="${left}" y="${Y(129) - 1}" width="${right - left}" height="2" fill="#ff3838"/>`;
  [13, 109, 203].forEach(function (n) {
    str += line(X(n), top, X(n), bottom, "#000", 'stroke-dasharray="3 3"');
  });

  for (i = 0; i < candles.length; i++) {
    var c = candles[i];
    var x = X(i);
    str += line(x, Y(c[1]) - 0.5, x, Y(c[2]) + 0.5, "#000");
    if (c[0] === c[3]) {
      str += line(x - 1.5, Y(c[0]), x + 1.5, Y(c[0]), "#000");
    } else {
      var y1 = Y(Math.max(c[0], c[3]));
      var y2 = Y(Math.min(c[0], c[3]));
      str += `<rect x="${x - 1}" y="${y1}" width="2" height="${y2 - y1}" fill="${c[3] > c[0] ? "#fff" : "#000"}" stroke="#000"/>`;
    }
  }

  // frame and scales
  str += `<rect x="${left - 0.5}" y="${top + 0.5}" width="${right - left}" height="${bottom - top}" fill="none" stroke="#000"/>`;
  for (i = 165; i >= 75; i -= 10) {
    str += line(right, Y(i), right + 3, Y(i), "#000");
    str += `<text x="${right + 5}" y="${Y(i) + 3}">1.2${i < 100 ? "0" : ""}${i}</text>`;
  }
  for (i = 0; i < times.length; i++) {
    str += line(X(i * 16), bottom, X(i * 16), bottom + 4, "#000");
    str += `<text x="${X(i * 16) - 1}" y="${bottom + 11}">${times[i]}</text>`;
  }
  str += `<rect x="${right + 2}" y="${Y(129) - 5}" width="31" height="9" fill="#f00"/><text x="${right + 5}" y="${Y(129) + 3}" fill="#fff">1.2129</text>`;
  str += `<rect x="${right + 2}" y="${Y(127) - 4}" width="31" height="9" fill="#000"/><text x="${right + 5}" y="${Y(127) + 3}" fill="#fff">1.2127</text>`;

  for (i = 0; i < levels.length; i++) {
    str += `<text x="9" y="${Y(levels[i][0]) - 2}">${levels[i][2]}</text>`;
  }
  str += `<path d="M6 8h7l-3.500 4z"/><text x="16" y="13">EURUSD,M15&#160; 1.2127 1.2127 1.2127 1.2127</text>`;
  str += `<text x="${right - 15}" y="13" text-anchor="end">Moving Average</text>`;
  str += `<g fill="none" stroke="#000"><circle cx="${right - 9}" cy="10" r="4.500"/><path stroke-width=".7" d="M${right - 12} 8l2 2m0-2l-2 2m4-2l2 2m0-2l-2 2M${right - 11} 13q2-2 4 0"/></g>`;

  // order notes
  str += `<text class="note-text" x="${right - 162}" y="70">ОРДЕР НА ПОКУПКУ</text>`;
  str += `<text class="note-text" x="${right - 158}" y="270">ОРДЕР НА ПРОДАЖУ</text>`;
  str += `<g fill="#fff" stroke="#f33"><path d="M${right - 87} 42l4 4h-2v6h-4v-6h-2z"/><path d="M${right - 102} 297l4-4h-2v-6h-4v6h-2z"/></g>`;
  svg.innerHTML = str;
}

drawQuotes();
drawChart();
window.addEventListener("resize", drawChart);
```
